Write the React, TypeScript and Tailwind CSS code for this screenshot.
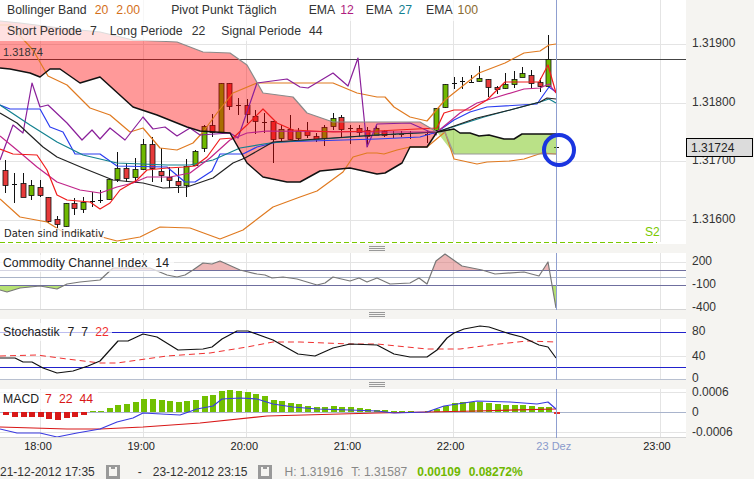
import type { ReactNode } from 'react'

type Candle = [number, number, number, number, number, 'r' | 'g' | 'd']

const UP = '#6fb800'
const DOWN = '#e63a3a'

// x, high, low, body top, body bottom, colour
const CANDLES: Candle[] = [
  [5, 160, 193, 170, 185, 'r'], [14, 173, 203, 184, 184, 'd'], [23, 173, 197, 183, 197, 'r'], [31, 180, 200, 185, 195, 'g'],
  [40, 180, 197, 187, 195, 'r'], [48, 197, 223, 197, 221, 'r'], [57, 216, 228, 219, 224, 'r'], [66, 203, 227, 203, 226, 'g'],
  [74, 198, 215, 203, 208, 'r'], [83, 197, 213, 202, 209, 'g'], [92, 192, 207, 201, 201, 'd'], [100, 190, 203, 200, 200, 'd'],
  [109, 179, 200, 179, 199, 'g'], [117, 152, 182, 168, 179, 'g'], [126, 163, 182, 168, 178, 'r'], [135, 158, 183, 169, 177, 'g'],
  [143, 139, 170, 144, 169, 'g'], [152, 137, 182, 144, 168, 'r'], [161, 148, 182, 171, 175, 'r'], [169, 167, 188, 177, 180, 'r'],
  [178, 168, 193, 181, 185, 'r'], [186, 159, 197, 166, 185, 'g'], [195, 150, 166, 151, 165, 'g'], [204, 125, 152, 126, 148, 'g'],
  [212, 114, 137, 125, 132, 'r'], [221, 83, 132, 83, 132, 'g'], [229, 83, 110, 83, 106, 'r'], [238, 98, 115, 105, 106, 'd'],
  [247, 99, 123, 105, 114, 'r'], [255, 110, 134, 116, 121, 'r'], [264, 113, 133, 122, 122, 'd'], [273, 121, 163, 121, 139, 'r'],
  [281, 125, 142, 129, 138, 'g'], [290, 115, 140, 129, 139, 'r'], [298, 128, 140, 131, 138, 'g'], [307, 122, 138, 131, 135, 'r'],
  [316, 133, 142, 136, 139, 'r'], [324, 125, 146, 127, 138, 'g'], [333, 113, 130, 118, 126, 'g'], [341, 115, 138, 117, 129, 'r'],
  [350, 125, 144, 128, 128, 'd'], [359, 125, 137, 128, 132, 'r'], [367, 127, 147, 130, 136, 'r'], [376, 125, 135, 128, 135, 'g'],
  [384, 130, 137, 131, 135, 'r'], [393, 131, 138, 134, 134, 'd'], [401, 131, 137, 134, 134, 'd'], [410, 131, 139, 133, 133, 'd'],
  [427, 131, 143, 134, 134, 'd'], [436, 108, 131, 108, 130, 'g'], [445, 84, 108, 84, 107, 'g'], [454, 77, 89, 83, 83, 'd'],
  [462, 77, 89, 81, 82, 'd'], [471, 75, 83, 82, 82, 'd'], [479, 66, 82, 78, 81, 'g'], [488, 79, 97, 79, 87, 'r'],
  [497, 86, 94, 87, 89, 'r'], [505, 73, 89, 84, 88, 'g'], [514, 71, 88, 79, 84, 'g'], [522, 67, 77, 73, 77, 'g'],
  [531, 70, 88, 75, 83, 'r'], [540, 78, 92, 82, 86, 'r'], [548, 35, 87, 59, 86, 'g'], [556, 145, 149, 147, 147, 'd'],
]

const CLOUD_TOP = '0,21 20,23 60,28 100,32 133,40 177,42 203,52 230,53 247,65 263,93 293,97 307,113 333,122 377,122 420,122 437,132'
const CLOUD_BOTTOM = '0,68 10,69 30,73 40,77 50,69 60,69 80,83 100,77 133,107 157,115 187,127 200,131 230,133 247,163 263,177 287,182 300,182 320,171 350,168 377,174 385,173 402,163 410,147 427,147 437,132'
const CLOUD_NEXT = '437,132 454,129 460,133 470,133 479,136 489,135 504,139 514,139 522,134 556,134'

const BOLL_UP = '0,25 10,25 33,50 48,76 67,85 90,108 110,115 130,132 143,128 160,148 177,150 193,143 203,132 217,113 233,93 257,83 333,83 357,93 377,97 385,97 394,107 410,117 427,121 445,100 479,73 505,63 524,53 540,51 549,45 556,44'
const BOLL_LOW = '0,199 20,217 47,222 63,232 87,233 117,241 140,237 160,227 190,228 220,239 243,230 273,207 300,197 317,191 343,172 353,157 367,153 377,153 384,154 397,150 410,147 427,147 445,132 454,159 477,164 487,162 510,161 524,159 542,153 556,154'
const PURPLE = '0,160 13,125 23,133 32,83 40,107 48,105 67,123 82,140 92,130 100,139 110,128 125,140 143,117 153,129 165,127 177,136 190,128 200,135 230,133 238,138 257,83 287,79 300,87 308,88 333,73 348,86 358,58 367,147 377,124 410,123 437,135'
const BLUE = '0,105 10,109 40,109 50,127 63,132 75,154 100,154 117,166 167,167 185,182 195,182 212,171 220,154 243,154 257,147 277,142 377,139 420,137 437,132 454,120 470,112 487,107 537,104 549,87 556,92'
const TEAL = '0,105 30,125 57,142 83,155 117,163 167,165 190,165 213,160 240,148 270,143 377,135 437,132 484,117 510,110 540,102 549,99 556,103'
const BLACK = '0,113 17,123 43,147 57,157 83,168 113,180 143,183 163,188 187,187 213,178 233,163 245,158 273,142 377,135 437,132 477,118 510,110 540,102 547,98 556,99'
const MAGENTA = '0,136 17,150 37,167 57,182 80,190 100,193 117,187 133,183 147,177 170,177 190,173 210,158 230,140 247,133 267,131 377,132 437,132 460,113 477,103 494,98 524,89 540,88 549,84 556,93'
const RED = '0,149 13,154 37,155 47,170 57,195 67,200 90,202 100,209 110,203 120,190 137,180 147,170 167,168 185,167 195,166 207,157 220,139 233,138 247,125 263,109 277,123 293,130 333,132 377,131 437,128 444,113 454,110 470,110 487,100 505,82 539,82 548,65 556,93'

const CCI = '0,290 7,292 20,288 40,286 57,289 67,284 80,282 100,280 113,268 150,268 167,275 177,277 185,275 193,270 203,263 212,264 220,261 240,270 257,274 265,275 272,278 283,277 297,279 317,285 325,283 333,277 350,281 359,278 367,282 377,278 390,284 410,283 419,278 427,284 436,261 445,254 462,266 482,270 495,274 524,272 539,276 548,262 552,285 556,308'

const STOCH_K = '0,358 15,358 23,362 32,362 43,368 57,373 73,371 88,366 100,361 118,341 128,341 143,334 157,337 178,350 203,349 212,347 222,339 237,331 248,331 273,340 298,354 315,356 333,348 350,344 377,345 394,354 410,357 427,357 437,350 447,338 454,333 464,329 480,326 489,327 507,333 522,337 539,345 548,347 556,358'
const STOCH_D = '0,356 37,355 67,359 100,363 117,363 167,356 210,353 247,347 273,342 300,342 350,344 377,344 427,349 460,349 490,345 527,341 556,342'

const MACD_MAIN = '0,429 17,433 40,433 57,437 77,433 100,429 117,422 133,418 143,413 180,415 197,409 213,406 222,399 240,398 257,399 273,404 293,407 317,409 350,410 377,411 394,413 427,412 444,406 477,401 510,402 537,404 548,402 556,409'
const MACD_SIGNAL = '0,427 67,429 100,429 143,427 200,423 267,416 377,413 427,412 477,411 556,409'

const HIST: [number, number][] = [
  [5, 415], [14, 417], [23, 417], [31, 417], [40, 417], [48, 419], [57, 420], [66, 418], [74, 417], [83, 415],
  [92, 411], [100, 411], [109, 408], [117, 405], [126, 404], [135, 402], [143, 399], [152, 399], [161, 400], [169, 401],
  [178, 402], [186, 401], [195, 400], [204, 396], [212, 395], [221, 391], [229, 390], [238, 391], [247, 392], [255, 394],
  [264, 396], [273, 400], [281, 401], [290, 403], [298, 404], [307, 406], [316, 407], [324, 407], [333, 406], [341, 407],
  [350, 407], [359, 408], [367, 409], [376, 410], [384, 410], [393, 411], [401, 411], [410, 411], [427, 411], [436, 409],
  [445, 406], [454, 403], [462, 402], [471, 402], [479, 402], [488, 403], [497, 404], [505, 405], [514, 405], [522, 405],
  [531, 406], [540, 407], [548, 407],
]

const GRID_X = [40, 143, 246, 350, 453, 660]

function Axis({ top, children }: { top: number; children: ReactNode }) {
  return (
    <span className="absolute left-[6px] -translate-y-1/2 text-[12px] leading-none text-[#333]" style={{ top }}>
      {children}
    </span>
  )
}

function Grip() {
  return (
    <div className="flex h-[9px] w-[754px] items-center justify-center">
      <div className="flex w-[16px] flex-col gap-px">
        <div className="h-px bg-[#999]" />
        <div className="h-px bg-[#999]" />
        <div className="h-px bg-[#999]" />
      </div>
    </div>
  )
}

function GridLines({ y1, y2 }: { y1: number; y2: number }) {
  return (
    <>
      {GRID_X.map((x) => (
        <line key={x} x1={x + 0.5} x2={x + 0.5} y1={y1} y2={y2} stroke="#e4e4e4" />
      ))}
    </>
  )
}

function Line({ points, color, width = 1.2 }: { points: string; color: string; width?: number }) {
  return <polyline points={points} fill="none" stroke={color} strokeWidth={width} strokeLinejoin="round" />
}

function MainChart() {
  return (
    <svg width={686} height={244} viewBox="0 0 686 244" className="block bg-white">
      <GridLines y1={0} y2={242} />
      {[44, 103, 161, 220].map((y) => (
        <line key={y} x1={0} x2={686} y1={y + 0.5} y2={y + 0.5} stroke="#e4e4e4" />
      ))}
      <line x1={0} x2={686} y1={59.5} y2={59.5} stroke="#444" />

      {CANDLES.map(([x, hi, lo, top, bot, c]) => (
        <g key={x}>
          <line x1={x + 0.5} x2={x + 0.5} y1={hi} y2={lo} stroke="#111" />
          {c === 'd' ? (
            <line x1={x - 2} x2={x + 3} y1={top + 0.5} y2={top + 0.5} stroke="#111" />
          ) : (
            <rect x={x - 2} y={top + 0.5} width={5} height={bot - top} fill={c === 'r' ? DOWN : UP} stroke="#111" strokeWidth={0.8} />
          )}
        </g>
      ))}

      <polygon points={`${CLOUD_TOP} ${CLOUD_BOTTOM.split(' ').reverse().join(' ')}`} fill="#ff0000" fillOpacity={0.4} />
      <polygon points={`${CLOUD_NEXT} 556,154 454,154`} fill="#6cc000" fillOpacity={0.47} />

      <Line points={BOLL_UP} color="#e07a20" />
      <Line points={BOLL_LOW} color="#e07a20" />
      <Line points={PURPLE} color="#8a1f9a" />
      <Line points={BLUE} color="#2a3cf0" />
      <Line points={TEAL} color="#12808f" />
      <Line points={BLACK} color="#222" />
      <Line points={MAGENTA} color="#c0258a" />
      <Line points={RED} color="#f01c1c" />
      <Line points={CLOUD_TOP} color="#8a8a8a" />
      <Line points="437,132 445,132 454,154 556,154" color="#9a9a9a" />
      <Line points={CLOUD_BOTTOM} color="#111" width={1.5} />
      <Line points={CLOUD_NEXT} color="#111" width={1.5} />

      <line x1={556.5} x2={556.5} y1={0} y2={244} stroke="#8f9fd0" />
      <line x1={0} x2={657} y1={242.5} y2={242.5} stroke="#7ac800" strokeDasharray="5 3" />
      <circle cx={559} cy={150} r={15} fill="none" stroke="#1a35e0" strokeWidth={4} />
    </svg>
  )
}

function CciChart() {
  const area = `0,270 ${CCI} 556,270`
  return (
    <svg width={686} height={57} viewBox="0 253 686 57" className="block bg-white">
      <defs>
        <clipPath id="cci-up"><rect x={0} y={253} width={686} height={17} /></clipPath>
        <clipPath id="cci-down"><rect x={0} y={285} width={686} height={25} /></clipPath>
      </defs>
      <GridLines y1={253} y2={309} />
      <line x1={0} x2={686} y1={262.5} y2={262.5} stroke="#e4e4e4" />
      <polygon points={area} fill="#d86060" fillOpacity={0.45} clipPath="url(#cci-up)" />
      <polygon points={`0,285 ${CCI} 556,285`} fill="#7ac800" fillOpacity={0.55} clipPath="url(#cci-down)" />
      <line x1={0} x2={686} y1={270.5} y2={270.5} stroke="#6f6f9f" />
      <line x1={0} x2={686} y1={277.5} y2={277.5} stroke="#aab4c8" />
      <line x1={0} x2={686} y1={285.5} y2={285.5} stroke="#6f6f9f" />
      <Line points={CCI} color="#777" />
      <line x1={0} x2={686} y1={309.5} y2={309.5} stroke="#d4d4d4" />
      <line x1={556.5} x2={556.5} y1={253} y2={310} stroke="#8f9fd0" />
    </svg>
  )
}

function StochChart() {
  return (
    <svg width={686} height={61} viewBox="0 319 686 61" className="block bg-white">
      <GridLines y1={319} y2={379} />
      <line x1={0} x2={686} y1={356.5} y2={356.5} stroke="#e4e4e4" />
      <line x1={0} x2={686} y1={332.5} y2={332.5} stroke="#2222cc" />
      <line x1={0} x2={686} y1={367.5} y2={367.5} stroke="#2222cc" />
      <polyline points={STOCH_D} fill="none" stroke="#f03030" strokeDasharray="6 4" />
      <Line points={STOCH_K} color="#111" />
      <line x1={0} x2={686} y1={379.5} y2={379.5} stroke="#b8c0d0" />
      <line x1={556.5} x2={556.5} y1={319} y2={380} stroke="#8f9fd0" />
    </svg>
  )
}

function MacdChart() {
  return (
    <svg width={686} height={49} viewBox="0 389 686 49" className="block bg-white">
      <GridLines y1={389} y2={437} />
      <line x1={0} x2={686} y1={392.5} y2={392.5} stroke="#e4e4e4" />
      <line x1={0} x2={686} y1={432.5} y2={432.5} stroke="#e4e4e4" />
      <line x1={0} x2={686} y1={412.5} y2={412.5} stroke="#a9b4cc" />
      {HIST.map(([x, y]) =>
        y > 412 ? (
          <rect key={x} x={x - 2} y={412} width={6} height={y - 412} fill="#d81818" />
        ) : (
          <rect key={x} x={x - 2} y={y} width={6} height={412 - y} fill="#72c000" />
        ),
      )}
      <rect x={554} y={412} width={6} height={2} fill="#e03030" />
      <Line points={MACD_SIGNAL} color="#d81818" />
      <Line points={MACD_MAIN} color="#3a3ae0" />
      <line x1={0} x2={686} y1={437.5} y2={437.5} stroke="#d4d4d4" />
      <line x1={556.5} x2={556.5} y1={389} y2={438} stroke="#8f9fd0" />
    </svg>
  )
}

function CalendarIcon() {
  return (
    <svg width={14} height={14} viewBox="0 0 14 14" className="block shrink-0">
      <rect width={14} height={14} fill="#999" />
      <rect x={3} y={4} width={8} height={7} fill="#f5f4f1" />
      <rect x={3} y={2} width={2} height={2} fill="#f5f4f1" />
      <rect x={9} y={2} width={2} height={2} fill="#f5f4f1" />
    </svg>
  )
}

export default function App() {
  return (
    <div className="h-[479px] w-[754px] overflow-hidden bg-[#f5f4f1] font-['Liberation_Sans',Arial,sans-serif] text-[#333]">
      {/* main chart */}
      <div className="flex">
        <div className="relative w-[686px]">
          <MainChart />
          <div className="absolute left-0 top-0 flex h-[21px] w-[505px] items-center bg-white/70 pl-[7px] text-[12.25px]">
            <span>Bollinger Band</span>
            <span className="ml-[8px] text-[#d4701a]">20</span>
            <span className="ml-[8px] text-[#d4701a]">2.00</span>
            <span className="ml-[31px]">Pivot Punkt</span>
            <span className="ml-[4px]">Täglich</span>
            <span className="ml-[32px]">EMA</span>
            <span className="ml-[5px] text-[#b01c80]">12</span>
            <span className="ml-[12px]">EMA</span>
            <span className="ml-[6px] text-[#12808f]">27</span>
            <span className="ml-[14px]">EMA</span>
            <span className="ml-[5px] text-[#8a6a30]">100</span>
          </div>
          <div className="absolute left-0 top-[21px] flex h-[20px] w-[328px] items-center bg-white/70 pl-[7px] text-[12.25px]">
            <span>Short Periode</span>
            <span className="ml-[8px]">7</span>
            <span className="ml-[13px]">Long Periode</span>
            <span className="ml-[9px]">22</span>
            <span className="ml-[16px]">Signal Periode</span>
            <span className="ml-[8px]">44</span>
          </div>
          <span className="absolute left-[3px] top-[46px] text-[11px] leading-[12px] text-[#333]">1.31874</span>
          <span className="absolute left-[4px] top-[228px] bg-white/70 font-['DejaVu_Sans',sans-serif] text-[10px] leading-[12px] text-[#222]">
            Daten sind indikativ
          </span>
          <span className="absolute left-[645px] top-[226px] text-[12px] leading-[12px] text-[#7ac800]">S2</span>
        </div>
        <div className="relative w-[68px]">
          <Axis top={43}>1.31900</Axis>
          <Axis top={102}>1.31800</Axis>
          <Axis top={160}>1.31700</Axis>
          <Axis top={219}>1.31600</Axis>
          <div className="absolute left-0 top-[138px] flex h-[19px] w-[67px] items-center border border-black bg-[#dcdcdc] pl-[4px] text-[12px] text-[#222]">
            1.31724
          </div>
        </div>
      </div>
      <Grip />

      {/* CCI */}
      <div className="flex">
        <div className="relative w-[686px]">
          <CciChart />
          <div className="absolute left-0 top-[2px] flex h-[17px] items-center bg-white/70 pl-[3px] pr-[5px] text-[12.25px] text-[#222]">
            <span>Commodity Channel Index</span>
            <span className="ml-[8px]">14</span>
          </div>
        </div>
        <div className="relative w-[68px]">
          <Axis top={8}>200</Axis>
          <Axis top={31}>-100</Axis>
          <Axis top={54}>-400</Axis>
        </div>
      </div>
      <Grip />

      {/* Stochastik */}
      <div className="flex">
        <div className="relative w-[686px]">
          <StochChart />
          <div className="absolute left-0 top-[4px] flex h-[18px] items-center bg-white/70 pl-[3px] pr-[3px] text-[12.25px] text-[#222]">
            <span>Stochastik</span>
            <span className="ml-[8px]">7</span>
            <span className="ml-[7px]">7</span>
            <span className="ml-[7px] text-[#f03030]">22</span>
          </div>
        </div>
        <div className="relative w-[68px]">
          <Axis top={12}>80</Axis>
          <Axis top={37}>40</Axis>
          <Axis top={59}>0</Axis>
        </div>
      </div>
      <Grip />

      {/* MACD */}
      <div className="flex">
        <div className="relative w-[686px]">
          <MacdChart />
          <div className="absolute left-0 top-[1px] flex h-[19px] items-center bg-white/70 pl-[3px] pr-[5px] text-[12.25px] text-[#222]">
            <span>MACD</span>
            <span className="ml-[6px] text-[#d81818]">7</span>
            <span className="ml-[7px] text-[#d81818]">22</span>
            <span className="ml-[7px] text-[#d81818]">44</span>
          </div>
        </div>
        <div className="relative w-[68px]">
          <Axis top={3}>0.0006</Axis>
          <Axis top={23}>0</Axis>
          <Axis top={43}>-0.0006</Axis>
        </div>
      </div>

      {/* time axis */}
      <div className="mt-[1px] flex h-[14px] w-[677px] items-center justify-between pl-[18px] text-[11px] text-[#222]">
        {['18:00', '19:00', '20:00', '21:00', '22:00'].map((t) => (
          <span key={t} className="w-[40px] text-center">{t}</span>
        ))}
        <span className="w-[40px] whitespace-nowrap text-center text-[#8a9acc]">23 Dez</span>
        <span className="w-[40px] text-center">23:00</span>
      </div>

      {/* footer */}
      <div className="mt-[12px] flex h-[14px] items-center whitespace-nowrap text-[12px] text-[#333]">
        <span>21-12-2012 17:35</span>
        <span className="ml-[11px]"><CalendarIcon /></span>
        <span className="ml-[18px]">-</span>
        <span className="ml-[11px]">23-12-2012 23:15</span>
        <span className="ml-[10px]"><CalendarIcon /></span>
        <span className="ml-[13px] text-[#888]">H: 1.31916</span>
        <span className="ml-[8px] text-[#888]">T: 1.31587</span>
        <span className="ml-[10px] font-bold text-[#6fb800]">0.00109</span>
        <span className="ml-[8px] font-bold text-[#6fb800]">0.08272%</span>
      </div>
    </div>
  )
}
